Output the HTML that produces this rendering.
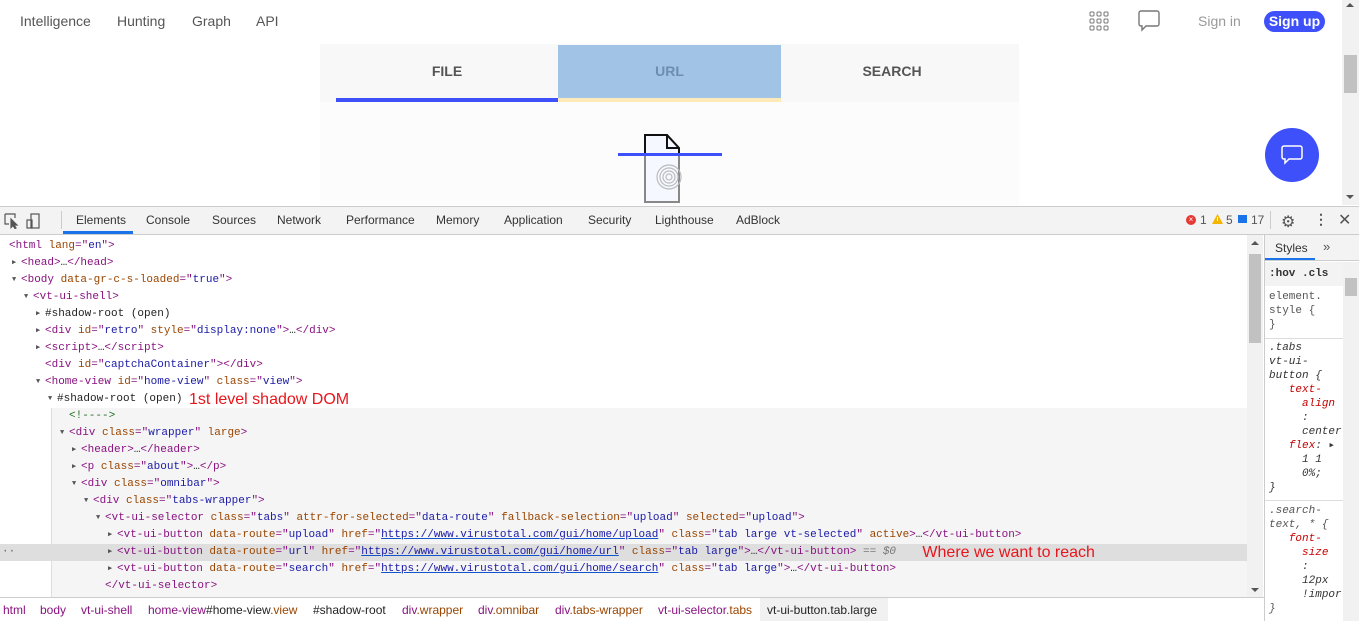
<!DOCTYPE html>
<html><head><meta charset="utf-8"><style>
*{margin:0;padding:0;box-sizing:border-box}
body{width:1359px;height:621px;overflow:hidden;background:#fff;font-family:"Liberation Sans",sans-serif;position:relative}
.a{position:absolute}
.nav{font-size:14px;color:#555;top:13px}
.tab{position:absolute;top:44px;height:58px;font-size:14px;font-weight:bold;text-align:center;line-height:54px;color:#555}
.dt{position:absolute;top:213px;font-size:12px;color:#333}
.ln{position:absolute;left:0;width:1247px;height:17px;line-height:17px;font-family:"Liberation Mono",monospace;font-size:11px;white-space:pre;color:#881280;overflow:hidden}
.t{color:#881280}.n{color:#994500}.v{color:#1a1aa6}.c{color:#236e25}.k{color:#222}
.u{color:#1a1aa6;text-decoration:underline;text-decoration-color:#1155cc}
.tri{display:inline-block;width:9px;font-size:7px;line-height:17px;color:#555;vertical-align:top}
.red{display:inline-block;vertical-align:top;line-height:17px;height:17px;font-family:"Liberation Sans",sans-serif;font-size:16px;color:#e8161c}
.bc{position:absolute;top:603px;font-size:12px;color:#881280}
.st{position:absolute;left:1269px;font-family:"Liberation Mono",monospace;font-size:11px;line-height:14px;white-space:pre;color:#333}
</style></head><body>
<!-- top nav -->
<div class="a nav" style="left:20px">Intelligence</div>
<div class="a nav" style="left:117px">Hunting</div>
<div class="a nav" style="left:192px">Graph</div>
<div class="a nav" style="left:256px">API</div>
<svg class="a" style="left:1089px;top:11px" width="20" height="20" viewBox="0 0 20 20" fill="none" stroke="#777" stroke-width="1"><g><rect x="1" y="1" width="4" height="4" rx="1"/><rect x="8" y="1" width="4" height="4" rx="1"/><rect x="15" y="1" width="4" height="4" rx="1"/><rect x="1" y="8" width="4" height="4" rx="1"/><rect x="8" y="8" width="4" height="4" rx="1"/><rect x="15" y="8" width="4" height="4" rx="1"/><rect x="1" y="15" width="4" height="4" rx="1"/><rect x="8" y="15" width="4" height="4" rx="1"/><rect x="15" y="15" width="4" height="4" rx="1"/></g></svg>
<svg class="a" style="left:1138px;top:10px" width="22" height="22" viewBox="0 0 22 22" fill="none" stroke="#777" stroke-width="1.4"><path d="M3 1h16a2 2 0 0 1 2 2v11a2 2 0 0 1-2 2H8l-4 4v-4H3a2 2 0 0 1-2-2V3a2 2 0 0 1 2-2z"/></svg>
<div class="a" style="left:1198px;top:13px;font-size:14px;color:#999">Sign in</div>
<div class="a" style="left:1264px;top:11px;width:61px;height:21px;border-radius:11px;background:#3d50fa;color:#fff;font-weight:bold;font-size:14px;text-align:center;line-height:21px">Sign up</div>
<!-- page scrollbar -->
<div class="a" style="left:1342px;top:0;width:17px;height:205px;background:#f1f1f1"></div>
<div class="a" style="left:1344px;top:55px;width:13px;height:38px;background:#c1c1c1"></div>
<div class="a" style="left:1346px;top:3px;width:0;height:0;border:4px solid transparent;border-bottom:4px solid #555;border-top:0"></div>
<div class="a" style="left:1346px;top:195px;width:0;height:0;border:4px solid transparent;border-top:4px solid #555;border-bottom:0"></div>
<!-- tabs -->
<div class="a" style="left:320px;top:44px;width:699px;height:58px;background:#f8f8f8"></div>
<div class="a" style="left:320px;top:102px;width:699px;height:103px;background:#fcfcfc"></div>
<div class="a" style="left:558px;top:45px;width:223px;height:53px;background:#a0c3e6"></div>
<div class="a" style="left:336px;top:98px;width:222px;height:4px;background:#3d50fa"></div>
<div class="a" style="left:558px;top:98px;width:223px;height:4px;background:#fdeab8"></div>
<div class="tab" style="left:336px;width:222px">FILE</div>
<div class="tab" style="left:558px;width:223px;color:#6e8db0">URL</div>
<div class="tab" style="left:781px;width:222px">SEARCH</div>
<svg class="a" style="left:617px;top:133px" width="106" height="72" viewBox="0 0 106 72"><path d="M28 69V2h22l12 13v54z" fill="#f5f8ff" stroke="#888" stroke-width="2"/><path d="M28 22V2h22l12 13v7" fill="none" stroke="#111" stroke-width="2"/><path d="M50 2v13h12" fill="none" stroke="#111" stroke-width="2"/><rect x="1" y="20" width="104" height="3" fill="#3d50fa"/><g fill="none" stroke="#bbb" stroke-width="1.2"><circle cx="52" cy="44" r="3"/><circle cx="52" cy="44" r="6"/><circle cx="52" cy="44" r="9"/><circle cx="52" cy="44" r="12"/></g></svg>
<div class="a" style="left:1265px;top:128px;width:54px;height:54px;border-radius:50%;background:#3d50fa"></div>
<svg class="a" style="left:1280px;top:143px" width="24" height="24" viewBox="0 0 24 24" fill="none" stroke="#fff" stroke-width="1.5"><path d="M4 3h16a2 2 0 0 1 2 2v9a2 2 0 0 1-2 2H9l-4 4v-4H4a2 2 0 0 1-2-2V5a2 2 0 0 1 2-2z"/></svg>
<!-- devtools toolbar -->
<div class="a" style="left:0;top:206px;width:1359px;height:29px;background:#f3f3f3;border-top:1px solid #ccc;border-bottom:1px solid #ccc"></div>
<svg class="a" style="left:4px;top:213px" width="40" height="16" viewBox="0 0 40 16" fill="none" stroke="#555" stroke-width="1.2"><path d="M1 1h10v4M1 1v10h4"/><path d="M7 6l6 6-3 0 2 3-1 .5-2-3-2 2z" fill="#555"/><rect x="27" y="1" width="8" height="14"/><rect x="23" y="7" width="5" height="8"/></svg>
<div class="a" style="left:61px;top:211px;width:1px;height:18px;background:#ccc"></div>
<div class="dt" style="left:76px">Elements</div>
<div class="a" style="left:63px;top:231px;width:70px;height:3px;background:#1a73e8"></div>
<div class="dt" style="left:146px">Console</div>
<div class="dt" style="left:212px">Sources</div>
<div class="dt" style="left:277px">Network</div>
<div class="dt" style="left:346px">Performance</div>
<div class="dt" style="left:436px">Memory</div>
<div class="dt" style="left:504px">Application</div>
<div class="dt" style="left:588px">Security</div>
<div class="dt" style="left:655px">Lighthouse</div>
<div class="dt" style="left:736px">AdBlock</div>
<div class="a" style="left:1186px;top:215px;width:10px;height:10px;border-radius:50%;background:#e53935;color:#fff;font-size:8px;line-height:10px;text-align:center">×</div>
<div class="dt" style="left:1200px;color:#555">1</div>
<svg class="a" style="left:1212px;top:214px" width="11" height="11" viewBox="0 0 11 11"><path d="M5.5 0L11 10H0z" fill="#f4b400"/><rect x="5" y="3" width="1" height="4" fill="#fff"/></svg>
<div class="dt" style="left:1226px;color:#555">5</div>
<div class="a" style="left:1238px;top:215px;width:9px;height:8px;background:#1a73e8"></div>
<div class="dt" style="left:1251px;color:#555">17</div>
<div class="a" style="left:1270px;top:211px;width:1px;height:18px;background:#ccc"></div>
<div class="a" style="left:1281px;top:212px;font-size:16px;color:#555">⚙</div>
<div class="a" style="left:1314px;top:211px;font-size:14px;color:#555;font-weight:bold">⋮</div>
<div class="a" style="left:1338px;top:210px;font-size:16px;color:#555">✕</div>
<!-- elements tree -->
<div class="a" style="left:52px;top:408px;width:1195px;height:190px;background:#f5f5f5"></div>
<div class="a" style="left:51px;top:408px;width:1px;height:190px;background:#ddd"></div>
<div class="a" style="left:0;top:544px;width:1247px;height:17px;background:#dedede"></div>
<div class="ln" style="top:238px;padding-left:9px">&lt;html <span class="n">lang</span>="<span class="v">en</span>"&gt;</div>
<div class="ln" style="top:255px;padding-left:12px"><span class="tri">▶</span>&lt;head&gt;<span class="k">…</span>&lt;/head&gt;</div>
<div class="ln" style="top:272px;padding-left:12px"><span class="tri">▼</span>&lt;body <span class="n">data-gr-c-s-loaded</span>="<span class="v">true</span>"&gt;</div>
<div class="ln" style="top:289px;padding-left:24px"><span class="tri">▼</span>&lt;vt-ui-shell&gt;</div>
<div class="ln" style="top:306px;padding-left:36px"><span class="tri">▶</span><span class="k">#shadow-root (open)</span></div>
<div class="ln" style="top:323px;padding-left:36px"><span class="tri">▶</span>&lt;div <span class="n">id</span>="<span class="v">retro</span>" <span class="n">style</span>="<span class="v">display:none</span>"&gt;<span class="k">…</span>&lt;/div&gt;</div>
<div class="ln" style="top:340px;padding-left:36px"><span class="tri">▶</span>&lt;script&gt;<span class="k">…</span>&lt;/script&gt;</div>
<div class="ln" style="top:357px;padding-left:45px">&lt;div <span class="n">id</span>="<span class="v">captchaContainer</span>"&gt;&lt;/div&gt;</div>
<div class="ln" style="top:374px;padding-left:36px"><span class="tri">▼</span>&lt;home-view <span class="n">id</span>="<span class="v">home-view</span>" <span class="n">class</span>="<span class="v">view</span>"&gt;</div>
<div class="ln" style="top:391px;padding-left:48px"><span class="tri">▼</span><span class="k">#shadow-root (open)</span> <span class="red">1st level shadow DOM</span></div>
<div class="ln" style="top:408px;padding-left:69px;background:transparent"><span class="c">&lt;!----&gt;</span></div>
<div class="ln" style="top:425px;padding-left:60px"><span class="tri">▼</span>&lt;div <span class="n">class</span>="<span class="v">wrapper</span>" <span class="n">large</span>&gt;</div>
<div class="ln" style="top:442px;padding-left:72px"><span class="tri">▶</span>&lt;header&gt;<span class="k">…</span>&lt;/header&gt;</div>
<div class="ln" style="top:459px;padding-left:72px"><span class="tri">▶</span>&lt;p <span class="n">class</span>="<span class="v">about</span>"&gt;<span class="k">…</span>&lt;/p&gt;</div>
<div class="ln" style="top:476px;padding-left:72px"><span class="tri">▼</span>&lt;div <span class="n">class</span>="<span class="v">omnibar</span>"&gt;</div>
<div class="ln" style="top:493px;padding-left:84px"><span class="tri">▼</span>&lt;div <span class="n">class</span>="<span class="v">tabs-wrapper</span>"&gt;</div>
<div class="ln" style="top:510px;padding-left:96px"><span class="tri">▼</span>&lt;vt-ui-selector <span class="n">class</span>="<span class="v">tabs</span>" <span class="n">attr-for-selected</span>="<span class="v">data-route</span>" <span class="n">fallback-selection</span>="<span class="v">upload</span>" <span class="n">selected</span>="<span class="v">upload</span>"&gt;</div>
<div class="ln" style="top:527px;padding-left:108px"><span class="tri">▶</span>&lt;vt-ui-button <span class="n">data-route</span>="<span class="v">upload</span>" <span class="n">href</span>="<span class="u">https://www.virustotal.com/gui/home/upload</span>" <span class="n">class</span>="<span class="v">tab large vt-selected</span>" <span class="n">active</span>&gt;<span class="k">…</span>&lt;/vt-ui-button&gt;</div>
<div class="ln" style="top:544px;padding-left:108px"><span class="tri">▶</span>&lt;vt-ui-button <span class="n">data-route</span>="<span class="v">url</span>" <span class="n">href</span>="<span class="u">https://www.virustotal.com/gui/home/url</span>" <span class="n">class</span>="<span class="v">tab large</span>"&gt;<span class="k">…</span>&lt;/vt-ui-button&gt; <span style="color:#777">== <i>$0</i></span>    <span class="red">Where we want to reach</span></div>
<div class="ln" style="top:544px;left:0;width:20px;padding-left:2px;color:#666">··</div>
<div class="ln" style="top:561px;padding-left:108px"><span class="tri">▶</span>&lt;vt-ui-button <span class="n">data-route</span>="<span class="v">search</span>" <span class="n">href</span>="<span class="u">https://www.virustotal.com/gui/home/search</span>" <span class="n">class</span>="<span class="v">tab large</span>"&gt;<span class="k">…</span>&lt;/vt-ui-button&gt;</div>
<div class="ln" style="top:578px;padding-left:105px">&lt;/vt-ui-selector&gt;</div>
<!-- tree scrollbar -->
<div class="a" style="left:1247px;top:235px;width:16px;height:363px;background:#f1f1f1"></div>
<div class="a" style="left:1249px;top:254px;width:12px;height:89px;background:#c1c1c1"></div>
<div class="a" style="left:1251px;top:241px;border:4px solid transparent;border-bottom:4px solid #555;border-top:0"></div>
<div class="a" style="left:1251px;top:588px;border:4px solid transparent;border-top:4px solid #555;border-bottom:0"></div>
<!-- breadcrumbs -->
<div class="a" style="left:0;top:597px;width:1264px;height:24px;background:#fff;border-top:1px solid #ccc"></div>
<div class="a" style="left:760px;top:598px;width:128px;height:23px;background:#f1f1f1"></div>
<div class="bc" style="left:3px">html</div>
<div class="bc" style="left:40px">body</div>
<div class="bc" style="left:81px">vt-ui-shell</div>
<div class="bc" style="left:148px">home-view<span style="color:#222">#home-view</span><span style="color:#994500">.view</span></div>
<div class="bc" style="left:313px;color:#222">#shadow-root</div>
<div class="bc" style="left:402px">div<span style="color:#994500">.wrapper</span></div>
<div class="bc" style="left:478px">div<span style="color:#994500">.omnibar</span></div>
<div class="bc" style="left:555px">div<span style="color:#994500">.tabs-wrapper</span></div>
<div class="bc" style="left:658px">vt-ui-selector<span style="color:#994500">.tabs</span></div>
<div class="bc" style="left:767px;color:#222">vt-ui-button.tab.large</div>
<!-- styles pane -->
<div class="a" style="left:1264px;top:235px;width:95px;height:386px;background:#fff;border-left:1px solid #ccc"></div>
<div class="a" style="left:1265px;top:235px;width:94px;height:26px;background:#f3f3f3;border-bottom:1px solid #ccc"></div>
<div class="a" style="left:1275px;top:241px;font-size:12px;color:#333">Styles</div>
<div class="a" style="left:1265px;top:258px;width:50px;height:2px;background:#1a73e8"></div>
<div class="a" style="left:1323px;top:239px;font-size:13px;color:#555">»</div>
<div class="a" style="left:1265px;top:262px;width:78px;height:24px;background:#f3f3f3"></div>
<div class="st" style="top:267px;font-weight:bold;color:#333">:hov .cls</div>
<div class="a" style="left:1343px;top:262px;width:16px;height:359px;background:#f1f1f1"></div>
<div class="a" style="left:1345px;top:278px;width:12px;height:18px;background:#c1c1c1"></div>
<div class="st" style="top:290px;color:#555">element.
style {
}</div>
<div class="a" style="left:1265px;top:338px;width:78px;height:1px;background:#ddd"></div>
<div class="st" style="top:341px;font-style:italic">.tabs
vt-ui-
button {
   <span style="color:#c80000">text-</span>
     <span style="color:#c80000">align</span>
     :
     center
   <span style="color:#c80000">flex</span>: ▸
     1 1
     0%;
}</div>
<div class="a" style="left:1265px;top:500px;width:78px;height:1px;background:#ddd"></div>
<div class="st" style="top:504px;font-style:italic;color:#555">.search-
text, * {
   <span style="color:#c80000">font-</span>
     <span style="color:#c80000">size</span>
     <span style="color:#333">:</span>
     <span style="color:#333">12px</span>
     <span style="color:#333">!impor</span>
}</div>
</body></html>
